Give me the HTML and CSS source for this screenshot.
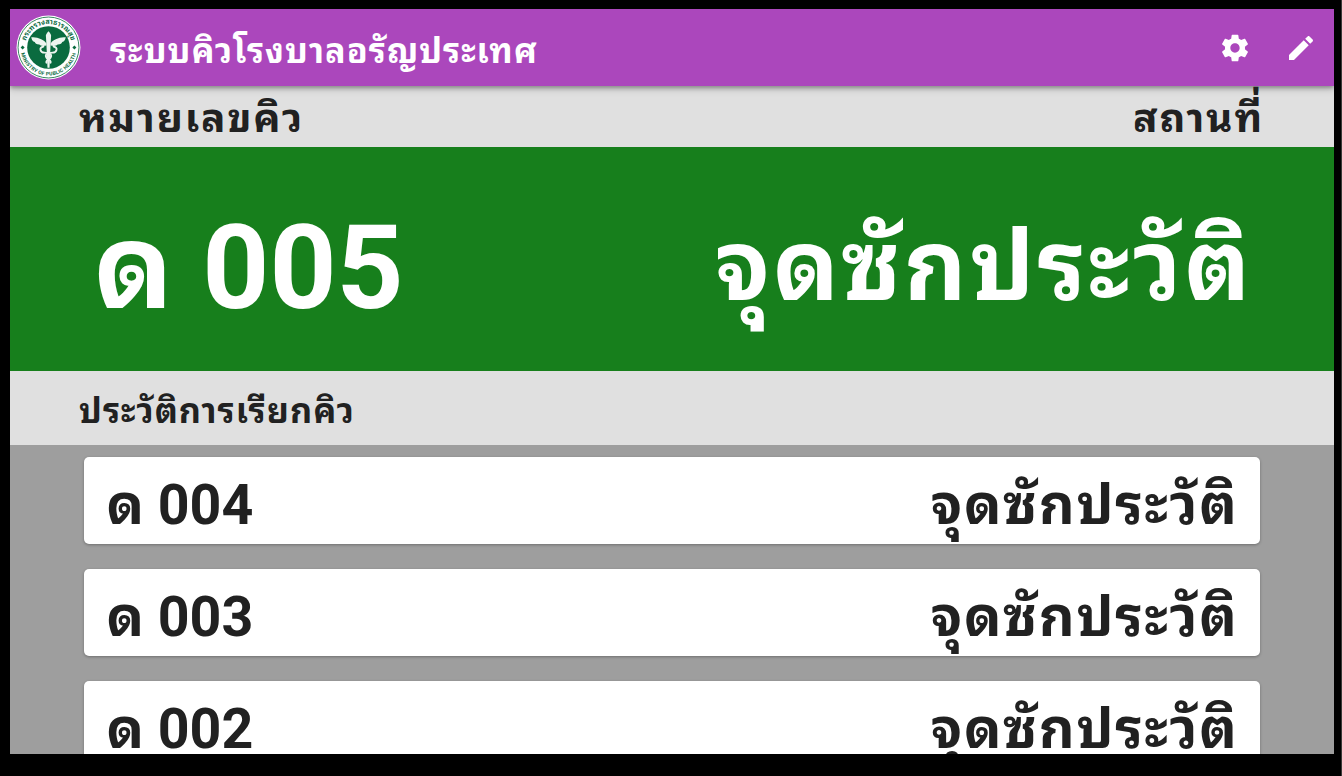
FILE: index.html
```html
<!DOCTYPE html>
<html lang="th">
<head>
<meta charset="utf-8">
<title>ระบบคิว</title>
<link rel="stylesheet" href="styles.css">
</head>
<body>
<div class="screen">
  <header class="toolbar">
    <svg class="logo" viewBox="0 0 64 64">
      <defs>
        <path id="arc-top" d="M8.800 32a23.200 23.200 0 0 1 46.400 0"/>
        <path id="arc-bottom" d="M4.400 32a27.600 27.600 0 0 0 55.200 0"/>
      </defs>
      <circle cx="32" cy="32" r="31.500" fill="#fff"/>
      <circle cx="32" cy="32" r="30" fill="none" stroke="#0a6b3f" stroke-width=".8"/>
      <circle cx="32" cy="32" r="21" fill="#0a6b3f"/>
      <text class="seal-th"><textPath href="#arc-top" startOffset="50%" text-anchor="middle">กระทรวงสาธารณสุข</textPath></text>
      <text class="seal-en"><textPath href="#arc-bottom" startOffset="50%" text-anchor="middle">MINISTRY OF PUBLIC HEALTH</textPath></text>
      <path d="M4.500 32l2-2 2 2-2 2zM55.500 32l2-2 2 2-2 2z" fill="#0a6b3f"/>
      <g fill="#edf5ef">
        <path d="M32 16c-2 2-3 4-2.500 5.500L30 30l1 22h2l1-22 .5-8.500C35 20 34 18 32 16z"/>
        <path d="M30 30c-4 1-6 0-7-1-3 0-4-1-4.500-2.500-2 0-3-2-3.500-4.500 5 0 11 1 15 6zM34 30c4 1 6 0 7-1 3 0 4-1 4.500-2.500 2 0 3-2 3.500-4.500-5 0-11 1-15 6z"/>
      </g>
      <path d="M27 31c-5 1-3 6 1 6 5 0 8 2 6 5s-5 2-4 5M37 31c5 1 3 6-1 6-5 0-8 2-6 5s5 2 4 5" fill="none" stroke="#edf5ef" stroke-width="1.800" stroke-linecap="round"/>
    </svg>
    <h1 class="title">ระบบคิวโรงบาลอรัญประเทศ</h1>
    <div class="actions">
      <svg class="icon" viewBox="0 0 24 24"><path d="M19.430 12.980c.040-.320.070-.640.070-.980s-.030-.660-.070-.980l2.110-1.650c.190-.150.240-.420.120-.640l-2-3.460c-.120-.220-.390-.300-.610-.220l-2.490 1c-.520-.400-1.080-.730-1.690-.980l-.380-2.650C14.460 2.180 14.250 2 14 2h-4c-.250 0-.460.180-.490.420l-.380 2.650c-.610.250-1.170.590-1.690.980l-2.490-1c-.230-.090-.490 0-.610.220l-2 3.460c-.130.220-.070.490.120.640l2.110 1.650c-.040.320-.070.650-.070.980s.030.660.070.980l-2.110 1.650c-.190.150-.240.420-.120.640l2 3.460c.120.220.390.300.610.220l2.490-1c.520.400 1.080.730 1.690.980l.380 2.650c.030.240.240.420.490.420h4c.250 0 .460-.180.490-.420l.380-2.650c.610-.250 1.170-.590 1.690-.980l2.490 1c.230.090.490 0 .610-.220l2-3.460c.120-.220.070-.490-.120-.640l-2.110-1.650zM12 15.500c-1.930 0-3.500-1.570-3.500-3.500s1.570-3.500 3.500-3.500 3.500 1.570 3.500 3.500-1.570 3.500-3.500 3.500z"/></svg>
      <svg class="icon" viewBox="0 0 24 24"><path d="M3 17.250V21h3.750L17.810 9.940l-3.750-3.750L3 17.250zM20.710 7.040c.390-.390.390-1.020 0-1.410l-2.340-2.340c-.390-.390-1.020-.390-1.410 0l-1.830 1.830 3.750 3.750 1.830-1.830z"/></svg>
    </div>
  </header>
  <div class="heading"><span>หมายเลขคิว</span><span>สถานที่</span></div>
  <section class="current"><span class="number">ด 005</span><span class="place">จุดซักประวัติ</span></section>
  <h2 class="history-title">ประวัติการเรียกคิว</h2>
  <main class="history">
    <div class="card"><span class="card-number">ด 004</span><span class="card-place">จุดซักประวัติ</span></div>
    <div class="card"><span class="card-number">ด 003</span><span class="card-place">จุดซักประวัติ</span></div>
    <div class="card"><span class="card-number">ด 002</span><span class="card-place">จุดซักประวัติ</span></div>
  </main>
</div>
</body>
</html>
```
FILE: styles.css
```css
* { box-sizing: border-box; }
body {
  margin: 0;
  height: 776px;
  overflow: hidden;
  background: #000;
  border-right: 1px solid #3c3b39;
  padding: 9px 7px 22px 10px;
  font-family: Roboto, "Noto Sans Thai Looped", sans-serif;
  font-weight: 700;
  color: #212121;
}
.screen {
  height: 745px;
  overflow: hidden;
  display: flex;
  flex-direction: column;
  background: #9e9e9e;
}
.screen > * { flex: none; }
.toolbar {
  position: relative;
  height: 77px;
  display: flex;
  align-items: center;
  background: #ab47bc;
  color: #fff;
  padding: 0 17px 0 6px;
  box-shadow: 0 2px 4px rgba(0,0,0,.3), 0 3px 8px rgba(0,0,0,.16);
}
.logo { width: 65px; height: 65px; }
.seal-th { font-size: 7px; fill: #0a6b3f; }
.seal-en { font-size: 5px; letter-spacing: .25px; fill: #0a6b3f; }
.title { margin: 6px 0 0 29px; font-size: 34.200px; line-height: 48px; font-weight: 700; letter-spacing: .03em; }
.actions { margin-left: auto; display: flex; gap: 34px; }
.icon { width: 32px; height: 32px; fill: #fff; }
.heading {
  height: 61px;
  padding: 0 70px 0 69px;
  display: flex;
  justify-content: space-between;
  background: #e0e0e0;
  font-size: 40.500px;
  line-height: 64px;
  letter-spacing: .045em;
}
.heading span { position: relative; z-index: 1; }
.current {
  height: 223.500px;
  padding: 0 81px 0 84px;
  display: flex;
  justify-content: space-between;
  background: #177f1c;
  color: #fff;
}
.number { font-size: 117px; line-height: 243px; }
.place { font-size: 97px; line-height: 240px; letter-spacing: .03em; }
.history-title {
  margin: 0;
  height: 74.500px;
  padding-left: 69px;
  background: #e0e0e0;
  font-size: 34.200px;
  line-height: 81px;
  letter-spacing: .03em;
}
.history {
  padding: 12.400px 74.500px 0 74.400px;
  display: flex;
  flex-direction: column;
  gap: 25px;
}
.card {
  height: 87px;
  padding: 0 21px 0 22px;
  display: flex;
  justify-content: space-between;
  border-radius: 5px;
  background: #fff;
  box-shadow: 0 1px 3px rgba(0,0,0,.3);
  font-size: 55.500px;
  line-height: 98px;
}
.card-place { letter-spacing: .03em; }
```
